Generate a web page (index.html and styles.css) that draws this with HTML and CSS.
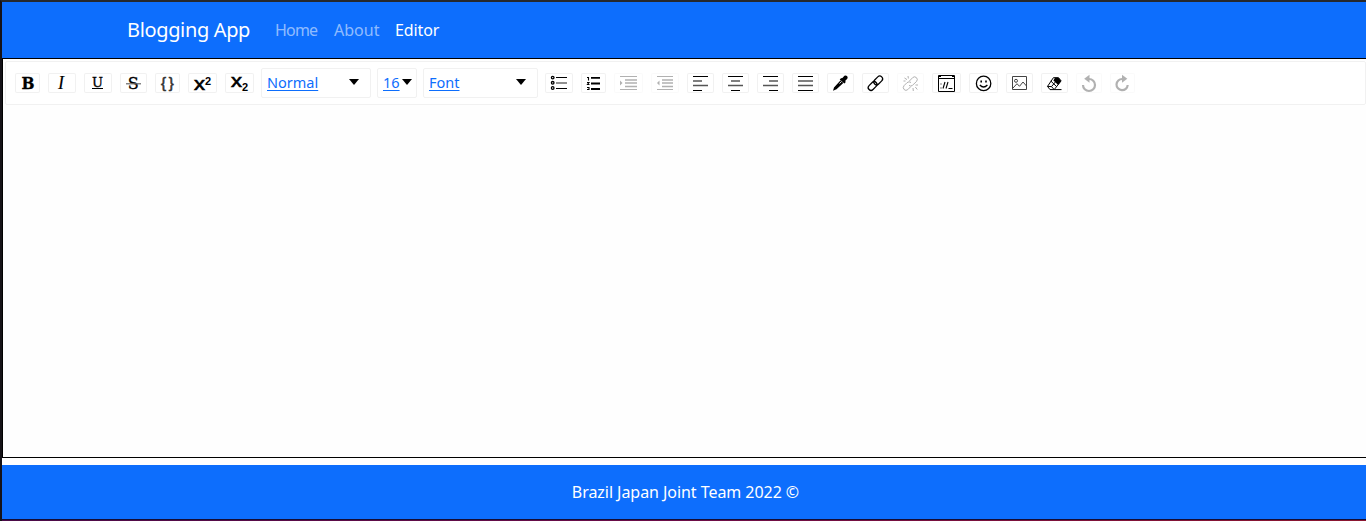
FILE: index.html
```html
<!DOCTYPE html>
<html lang="en">
<head>
<meta charset="utf-8">
<title>Blogging App</title>
<link rel="stylesheet" href="styles.css">
</head>
<body>
<div class="page">
<nav class="navbar">
  <a class="brand">Blogging App</a>
  <a class="link home">Home</a>
  <a class="link about">About</a>
  <a class="link editor-link">Editor</a>
</nav>
<main class="editor">
  <div class="toolbar">
    <button class="btn w25"><svg width="25" height="20"><text class="serif bold heavier" x="6.4" y="16" font-size="16" textLength="13" lengthAdjust="spacingAndGlyphs">B</text></svg></button>
    <button class="btn w28"><svg width="28" height="20"><text class="slant" x="10" y="15.7" font-size="18">I</text></svg></button>
    <button class="btn w28"><svg width="28" height="20"><text class="serif heavier" x="8" y="13.5" font-size="13" textLength="11" lengthAdjust="spacingAndGlyphs">U</text><path class="s" d="M8 15.5h11"/></svg></button>
    <button class="btn w27"><svg width="27" height="20"><text class="serif heavier" x="7.8" y="16.2" font-size="16" textLength="11" lengthAdjust="spacingAndGlyphs">S</text><path class="strike" d="M6 10.8h15"/></svg></button>
    <button class="btn w25"><svg width="25" height="20"><text class="sans brace" x="6" y="14.6" font-size="15">{</text><text class="sans brace" x="13.8" y="14.6" font-size="15">}</text></svg></button>
    <button class="btn w29"><svg width="29" height="20"><text class="sans medium" x="6" y="17.3" font-size="18" textLength="11" lengthAdjust="spacingAndGlyphs">x</text><text class="sans bold" x="17" y="11.5" font-size="11">2</text></svg></button>
    <button class="btn w29"><svg width="29" height="20"><text class="sans medium" x="6" y="14.3" font-size="18" textLength="11" lengthAdjust="spacingAndGlyphs">x</text><text class="sans bold" x="17" y="17.6" font-size="11">2</text></svg></button>
    <div class="select block"><span>Normal</span><i class="caret"></i></div>
    <div class="select size"><span>16</span><i class="caret"></i></div>
    <div class="select font"><span>Font</span><i class="caret"></i></div>
    <button class="btn w28"><svg width="28" height="20"><g class="s"><g class="dots"><circle cx="7.7" cy="4.6" r="1.3"/><circle cx="7.7" cy="9.8" r="1.3"/><circle cx="7.7" cy="15" r="1.3"/></g><path d="M11 4.5h11M11 15.5h11"/><path class="mid wide" d="M11 10h11"/></g></svg></button>
    <button class="btn w25"><svg width="25" height="20"><g class="s"><path class="digits" d="M6 4.5h1.5v3M6 9.5h2l-1.5 2h2M6 14.5h2v2h-2"/><path class="heavy" d="M10 4.8h9M10 10.5h9M10 16h9"/></g></svg></button>
    <button class="btn off w29"><svg width="29" height="20"><g class="s"><path d="M6 3.5h17M6 16.5h17"/><path class="wide" d="M11 7h12M11 10h12M11 13.5h12"/></g><path d="M6 7.5l2.5 2.5-2.5 2.5z"/></svg></button>
    <button class="btn off w28"><svg width="28" height="20"><g class="s"><path d="M6 3.5h16M6 16.5h16"/><path class="wide" d="M11 7h11M11 10h11M11 13.5h11"/></g><path d="M8.5 7.5L6 10l2.5 2.5z"/></svg></button>
    <button class="btn w27"><svg width="27" height="20"><g class="s"><path d="M6 3.5h15M6 17.5h9"/><path class="mid wide" d="M6 8h9M6 12.5h15"/></g></svg></button>
    <button class="btn w27"><svg width="27" height="20"><g class="s"><path d="M6 3.5h15M9 17.5h9"/><path class="mid wide" d="M9 8h9M6 12.5h15"/></g></svg></button>
    <button class="btn w27"><svg width="27" height="20"><g class="s"><path d="M6 3.5h15M12 17.5h9"/><path class="mid wide" d="M12 8h9M6 12.5h15"/></g></svg></button>
    <button class="btn w27"><svg width="27" height="20"><g class="s"><path d="M6 3.5h15M6 17.5h15"/><path class="mid wide" d="M6 8h15M6 12.5h15"/></g></svg></button>
    <button class="btn w27"><svg width="27" height="20"><path d="M6 17.8l1-3.4 6.4-7 2.9 2.5-6.8 6.4zM14 5.2l1.4-.3 2-2.1q1.5-.8 2.6.3 1.2 1.2.3 2.6l-2 2 .3 1.6-1.2 1.1-4.7-4z"/><path class="gap" d="M12.5 10.5l2-1.9"/></svg></button>
    <button class="btn w27"><svg width="27" height="20"><g class="s link-icon"><rect x="-5" y="-2.8" width="10" height="5.6" rx="2.8" transform="translate(16.2 7.4) rotate(-45)"/><rect x="-5" y="-2.8" width="10" height="5.6" rx="2.8" transform="translate(10.6 13) rotate(-45)"/></g></svg></button>
    <button class="btn off w27"><svg width="27" height="20"><g class="s"><path d="M12.4 8l3.4-3.5q1.8-1.5 3.6.1t.2 3.8l-4.2 4q-1.8 1.3-3.4 0M14 9.5q-2-1.6-4 .2l-3 3q-1.6 2 .1 3.8t3.7.1l3-3M7.5 5l2.5 1.6M11 3l.4 2.5M6.5 8h2M16 15l.3 3M18.3 14l2 2.5M18.5 12h2.5"/></g></svg></button>
    <button class="btn w29"><svg width="29" height="20"><g class="s"><path d="M6.5 2.5h16v16h-16zM6.5 5.5h16"/><path class="digits" d="M13 9l-2 6.5M16 9l-2 6.5M16.5 15.5h4"/><path class="dash" d="M9 10.5v5"/></g><path d="M7 2h2v2H7zM20 2h2v2h-2z"/></svg></button>
    <button class="btn w29"><svg width="29" height="20"><g class="s face"><circle cx="14.6" cy="10.4" r="7.2"/><path d="M10.8 12q3.8 4 7.6 0"/></g><path d="M11.4 7.4h1.6v2h-1.6zM16.2 7.4h1.6v2h-1.6z"/></svg></button>
    <button class="btn w27"><svg width="27" height="20"><g class="s photo"><path d="M6.5 3.5h14v13h-14zM7 15l4-4.3 2.5 2.6L17 9l3.5 4"/><circle cx="10" cy="7.8" r="1.5"/></g></svg></button>
    <button class="btn w27"><svg width="27" height="20"><path d="M14 4.7h3.5l2.7 3.2-3 4.2-4.8-4.7z"/><g class="s"><path d="M12.4 4.7h5.1l2.6 3.2-6.9 8.7H9l-2.5-3.2zM9.8 8l5.8 5.6M6.5 13.4l4 .2 5-6M10.5 13.6l2.7 3h7.3"/></g></svg></button>
    <button class="btn off w26"><svg width="26" height="20"><path class="arrow" d="M7 12a6 6 0 1 0 6-6"/><path d="M13.5 1.8v8L8.2 5.8z"/></svg></button>
    <button class="btn off w25"><svg width="25" height="20"><path class="arrow" d="M17.7 12a5.6 5.6 0 1 1-5.4-6"/><path d="M12 1.8v8l5.3-4z"/></svg></button>
  </div>
</main>
<footer class="footer"><span>Brazil Japan Joint Team 2022 ©</span></footer>
<div class="edge"></div>
</div>
</body>
</html>
```
FILE: styles.css
```css
* { box-sizing: border-box; }
body { margin: 0; background: #fff; font-family: "Noto Sans", "Open Sans", sans-serif; overflow: hidden; }
.page { height: 521px; border-left: 2px solid #151217; border-top: 2px solid #25282d; display: flex; flex-direction: column; }
.navbar { height: 56px; background: #0d6efd; display: flex; align-items: center; padding-left: 125px; white-space: nowrap; color: #fff; font-size: 16px; }
.brand { width: 148px; padding-bottom: 2px; font-size: 20px; letter-spacing: -0.35px; }
.link { line-height: 24px; }
.home { width: 59px; color: rgba(255,255,255,.55); letter-spacing: -0.8px; }
.about { width: 61px; color: rgba(255,255,255,.55); letter-spacing: 0; }
.editor-link { letter-spacing: -0.1px; }
.editor { height: 400px; border: 1px solid #000; border-right: 0; padding: 2px 0 0 2px; background: #fefefe; }
.toolbar { height: 44px; border: 1px solid #f1f1f1; border-radius: 2px; background: #fff; padding: 0 5px; display: flex; align-items: center; }
.btn { height: 20px; flex: none; margin: 0 4px; padding: 0; border: 0; background: #fff; border-radius: 2px; box-shadow: inset 0 0 0 1px #f1f1f1; }
.w25 { width: 25px; } .w26 { width: 26px; } .w27 { width: 27px; } .w28 { width: 28px; } .w29 { width: 29px; }
.off { opacity: .3; }
.btn svg { display: block; overflow: visible; }
.s { fill: none; stroke: #000; stroke-width: 1; }
.mid { stroke: #555; }
.strike { stroke: #666; stroke-width: 1.2; }
.wide { stroke-width: 1.3; }
.heavy { stroke-width: 1.8; }
.dots { stroke-width: 1.3; }
.digits { stroke-width: 1.1; }
.face { stroke-width: 1.3; }
.link-icon { stroke-width: 1.25; }
.photo { stroke: #444; }
.gap { stroke: #fff; stroke-width: .9; }
.dash { stroke-dasharray: 1 3; }
.arrow { fill: none; stroke: #000; stroke-width: 2.2; }
.serif { font-family: "DejaVu Serif", serif; }
.slant { font-family: "Liberation Serif", serif; font-style: italic; stroke: #000; stroke-width: .15; }
.heavier { stroke: #000; stroke-width: .3; }
.medium { stroke: #000; stroke-width: .6; }
.sans { font-family: "Liberation Sans", sans-serif; }
.bold { font-weight: bold; }
.brace { fill: #333; stroke: #333; stroke-width: .6; }
.select { height: 30px; flex: none; margin: 0 3px; padding: 0 5px; border: 1px solid #f1f1f1; border-radius: 2px; display: flex; align-items: center; justify-content: space-between; font-size: 14.5px; line-height: 20px; color: #0d6efd; text-decoration: underline; text-underline-offset: 2px; text-decoration-thickness: 1px; }
.select span { margin-top: -2px; }
.block { width: 110px; padding-right: 11px; }
.size { width: 40px; padding-right: 4px; }
.font { width: 115px; padding-right: 11px; }
.caret { border: 5px solid transparent; border-top: 6px solid #000; border-bottom: 0; margin-top: -2px; }
.footer { height: 54px; margin-top: 7px; background: #0d6efd; color: #fff; font-size: 16px; display: flex; align-items: center; justify-content: center; white-space: nowrap; letter-spacing: -0.05px; padding-left: 3px; }
.edge { height: 2px; border-top: 1px solid #130d35; background: linear-gradient(90deg, #4b0b48, #6d0d47 50%, #8c1730); }
```
